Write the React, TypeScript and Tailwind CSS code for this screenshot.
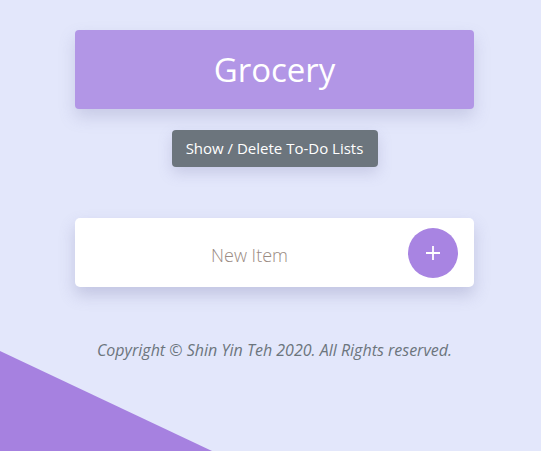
import { useState } from "react";

export default function App() {
  const [item, setItem] = useState("");
  return (
    <div
      className="relative min-h-[451px] w-full overflow-hidden bg-[#e3e7fb]"
      style={{ fontFamily: '"Open Sans", "Noto Sans", sans-serif' }}
    >
      {/* corner decoration */}
      <svg
        className="absolute bottom-0 left-0"
        width="212"
        height="100"
        viewBox="0 0 212 100"
      >
        <polygon points="0,0 212,100 0,100" fill="#a681e0" />
      </svg>

      <div className="relative flex flex-col items-center pl-2 pt-[30px]">
        <div className="flex h-[79px] w-[399px] items-center justify-center rounded-[4px] bg-[#b296e6] shadow-[0_8px_16px_rgba(120,120,170,0.25)]">
          <h1 className="text-[33px] leading-none text-white">Grocery</h1>
        </div>

        <button className="mt-[21px] h-[37px] w-[206px] rounded-[4px] bg-[#6c757d] text-[15px] text-white shadow-[0_6px_14px_rgba(120,120,170,0.25)]">
          Show / Delete To-Do Lists
        </button>

        <div className="mt-[51px] flex h-[69px] w-[399px] items-center rounded-[5px] bg-white pl-4 pr-4 shadow-[0_8px_16px_rgba(120,120,170,0.3)]">
          <input
            value={item}
            onChange={(e) => setItem(e.target.value)}
            placeholder="New Item"
            className="h-full flex-1 bg-transparent pt-1 text-center text-[18px] font-light text-[#8a7a72] outline-none placeholder:text-[#9a8a82]"
          />
          <button className="flex h-[50px] w-[50px] items-center justify-center rounded-full bg-[#a884e2] text-white">
            <svg width="16" height="16" viewBox="0 0 16 16">
              <path d="M8 1v14M1 8h14" stroke="white" strokeWidth="1.8" />
            </svg>
          </button>
        </div>

        <p className="mt-[51px] text-[16px] italic text-[#6c757d]">
          Copyright © Shin Yin Teh 2020. All Rights reserved.
        </p>
      </div>
    </div>
  );
}
